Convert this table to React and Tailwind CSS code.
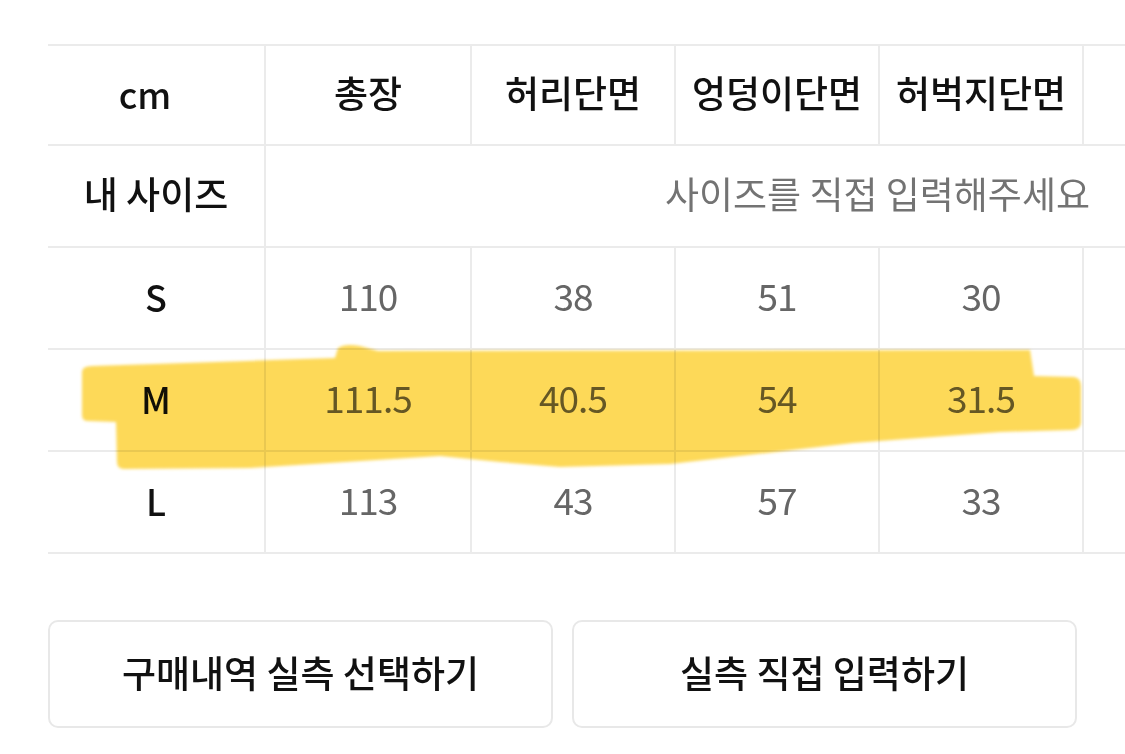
const columns = ['총장', '허리단면', '엉덩이단면', '허벅지단면'];

const sizes = [
  { label: 'S', values: ['110', '38', '51', '30'] },
  { label: 'M', values: ['111.5', '40.5', '54', '31.5'] },
  { label: 'L', values: ['113', '43', '57', '33'] },
];

const font = { fontFamily: '"Noto Sans CJK KR", "Liberation Sans", sans-serif' };

function Cell({ children, first, wide, className = '' }) {
  const width = first ? 'w-[218px]' : wide ? 'w-[206px]' : 'w-[204px]';
  return (
    <div
      className={`${width} shrink-0 h-full flex items-center justify-center pb-[4px] border-r-2 border-[#ebebeb] ${className}`}
    >
      {children}
    </div>
  );
}

function Highlighter() {
  // yellow marker stroke drawn over the M row
  return (
    <svg
      className="absolute inset-0 pointer-events-none mix-blend-multiply"
      width="1125"
      height="754"
      viewBox="0 0 1125 754"
    >
      <defs>
        <filter id="soft" x="-5%" y="-20%" width="110%" height="140%">
          <feGaussianBlur stdDeviation="1.8" />
        </filter>
      </defs>
      <path
        filter="url(#soft)"
        fill="#fdd750"
        fillOpacity="0.95"
        d="M 82 372 Q 82 366 92 366 L 335 358 L 338 348 Q 345 343 360 346 L 378 351 L 1030 350 L 1034 376 L 1074 377 Q 1081 378 1081 386 L 1081 423 Q 1080 430 1072 430 L 1000 432 L 853 443 L 670 464 L 560 467 L 500 462 L 440 456 L 250 468 L 124 469 Q 117 469 117 462 L 116 422 L 88 421 Q 82 421 82 415 Z"
      />
    </svg>
  );
}

export default function App() {
  return (
    <div className="relative w-[1125px] h-[754px] overflow-hidden bg-white" style={font}>
      <div className="pt-[44px] pl-[48px]">
        <div className="w-[1240px] border-t-2 border-[#ebebeb]">
          {/* header */}
          <div className="flex h-[100px] border-b-2 border-[#ebebeb] text-[37px] font-medium text-[#111]">
            <Cell first className="pr-[22px] text-[36px]">cm</Cell>
            {columns.map((c, i) => (
              <Cell key={c} wide={i === 0}>{c}</Cell>
            ))}
            <Cell />
          </div>

          {/* my size */}
          <div className="flex h-[102px] border-b-2 border-[#ebebeb]">
            <Cell first className="text-[37px] font-medium text-[#111]">내 사이즈</Cell>
            <div className="flex-1 h-full flex items-center justify-end pb-[4px] pr-[198px] text-[37px] text-[#737373]">
              사이즈를 직접 입력해주세요
            </div>
          </div>

          {sizes.map((s) => (
            <div key={s.label} className="flex h-[102px] border-b-2 border-[#ebebeb]">
              <Cell first className="text-[36px] font-medium text-[#111]">{s.label}</Cell>
              {s.values.map((v, i) => (
                <Cell key={i} wide={i === 0} className="text-[37px] text-[#666] tracking-[-1px]">
                  {v}
                </Cell>
              ))}
              <Cell />
            </div>
          ))}
        </div>
      </div>

      <div className="flex gap-[19px] px-[48px] pt-[66px]">
        <button className="flex-1 h-[108px] pb-[2px] rounded-[10px] border-2 border-[#e8e8e8] bg-white text-[37px] font-medium text-[#111]">
          구매내역 실측 선택하기
        </button>
        <button className="flex-1 h-[108px] pb-[2px] rounded-[10px] border-2 border-[#e8e8e8] bg-white text-[37px] font-medium text-[#111]">
          실측 직접 입력하기
        </button>
      </div>

      <Highlighter />
    </div>
  );
}
